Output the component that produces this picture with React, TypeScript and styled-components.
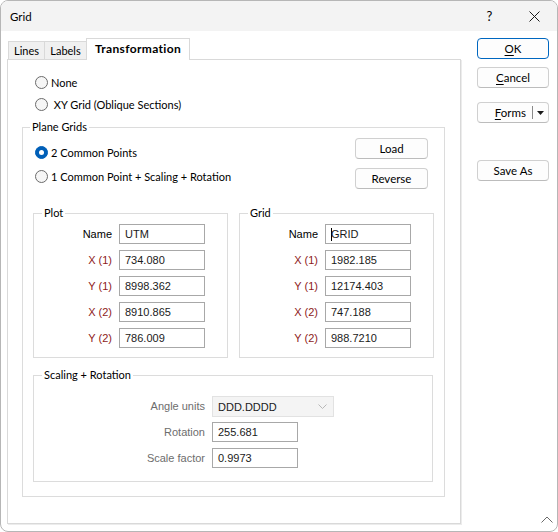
import React from "react";
import styled, { createGlobalStyle } from "styled-components";

const GlobalStyle = createGlobalStyle`
  html, body {
    margin: 0;
    padding: 0;
    background: #ffffff;
  }
  body {
    font-family: "Lato", "Noto Sans", sans-serif;
    font-size: 11px;
    color: #000000;
  }
`;

const Window = styled.div`
  position: relative;
  width: 558px;
  height: 532px;
  box-sizing: border-box;
  border: 1px solid #b6b6b6;
  border-radius: 8px;
  overflow: hidden;
  display: flex;
  flex-direction: column;
  background: #ffffff;
`;

const TitleBar = styled.div`
  height: 30px;
  flex: none;
  display: flex;
  align-items: center;
  background: #f3f3f3;
  padding-left: 9px;
  font-size: 11.5px;
`;

const Title = styled.div`
  flex: 1;
`;

const CaptionButton = styled.div`
  width: 45px;
  height: 30px;
  display: flex;
  align-items: center;
  justify-content: center;
  font-size: 13px;
`;

const Body = styled.div`
  flex: 1;
  display: flex;
  gap: 16px;
  padding: 7px 0 0 6px;
`;

const LeftColumn = styled.div`
  width: 454px;
  display: flex;
  flex-direction: column;
`;

const TabStrip = styled.div`
  height: 22px;
  display: flex;
  align-items: flex-end;
  padding-left: 1px;
  margin-bottom: -1px;
`;

const Tab = styled.div<{ $active?: boolean; $width: number }>`
  box-sizing: border-box;
  width: ${(p) => p.$width}px;
  height: ${(p) => (p.$active ? "22px" : "18px")};
  margin-bottom: ${(p) => (p.$active ? "0" : "1px")};
  display: flex;
  align-items: center;
  justify-content: center;
  border: 1px solid #d9d9d9;
  border-bottom: none;
  background: ${(p) => (p.$active ? "#ffffff" : "#f0f0f0")};
  font-size: ${(p) => (p.$active ? "12px" : "11px")};
  font-weight: ${(p) => (p.$active ? 700 : 400)};
  letter-spacing: ${(p) => (p.$active ? "0.35px" : "0")};
  position: ${(p) => (p.$active ? "relative" : "static")};
  padding-bottom: ${(p) => (p.$active ? "3px" : "0")};
  & + & {
    margin-left: -1px;
  }
`;

const Panel = styled.div`
  box-sizing: border-box;
  height: 465px;
  border: 1px solid #d9d9d9;
  box-shadow: 1px 1px 0 #ececec;
  padding: 11px 15px 0 14px;
  display: flex;
  flex-direction: column;
`;

const RadioRow = styled.label<{ $height?: number; $indent?: number }>`
  height: ${(p) => p.$height ?? 22}px;
  display: flex;
  align-items: center;
  gap: 3px;
  padding-left: ${(p) => p.$indent ?? 0}px;
  white-space: pre;
`;

const RadioDot = styled.span<{ $checked?: boolean }>`
  box-sizing: border-box;
  width: 13px;
  height: 13px;
  border-radius: 50%;
  flex: none;
  border: 1px solid ${(p) => (p.$checked ? "#005fb8" : "#6b6b6b")};
  background: ${(p) => (p.$checked ? "#005fb8" : "#f6f6f6")};
  display: flex;
  align-items: center;
  justify-content: center;
  &::after {
    content: "";
    display: ${(p) => (p.$checked ? "block" : "none")};
    width: 5px;
    height: 5px;
    border-radius: 50%;
    background: #ffffff;
  }
`;

const Group = styled.fieldset`
  margin: 0;
  padding: 0;
  min-width: 0;
  border: 1px solid #dcdcdc;
  box-sizing: border-box;
`;

const Legend = styled.legend<{ $offset?: number }>`
  margin-left: ${(p) => p.$offset ?? 8}px;
  padding: 0 2px;
  line-height: 16px;
  font-size: 11px;
`;

const PlaneGroup = styled(Group)`
  margin: 4px 0 0 0;
  padding: 0 0 14px 0;
`;

const TopSection = styled.div`
  display: flex;
  justify-content: space-between;
  padding: 3px 16px 0 12px;
`;

const RadioColumn = styled.div`
  padding-top: 2px;
  display: flex;
  flex-direction: column;
`;

const ButtonColumn = styled.div`
  display: flex;
  flex-direction: column;
  gap: 9px;
`;

const Button = styled.div<{ $width?: number; $default?: boolean; $top?: number }>`
  box-sizing: border-box;
  width: ${(p) => p.$width ?? 72}px;
  height: 21px;
  margin-top: ${(p) => p.$top ?? 0}px;
  border: 1px solid ${(p) => (p.$default ? "#0067c0" : "#d0d0d0")};
  border-bottom-color: ${(p) => (p.$default ? "#0067c0" : "#bcbcbc")};
  border-radius: 4px;
  background: #fdfdfd;
  display: flex;
  align-items: center;
  justify-content: center;
  font-size: 11.5px;
  flex: none;
`;

const SplitLabel = styled.div`
  flex: 1;
  display: flex;
  justify-content: flex-end;
  padding-right: 6px;
`;

const SplitDivider = styled.div`
  width: 1px;
  height: 13px;
  background: #8a8a8a;
`;

const SplitArrow = styled.div`
  width: 15px;
  display: flex;
  align-items: center;
  justify-content: center;
`;

const Key = styled.span`
  text-decoration: underline;
  text-underline-offset: 2px;
`;

const PairRow = styled.div`
  display: flex;
  gap: 11px;
  margin-top: 16px;
  padding: 0 10px;
`;

const CoordGroup = styled(Group)`
  width: 195px;
  padding: 3px 0 9px 0;
`;

const FormGrid = styled.div<{ $labelWidth: number }>`
  display: grid;
  grid-template-columns: ${(p) => p.$labelWidth}px auto;
  grid-auto-rows: 20px;
  column-gap: 7px;
  row-gap: 6px;
  justify-items: start;
  align-items: center;
`;

const FieldLabel = styled.div<{ $tone?: "plain" | "coord" | "muted" }>`
  justify-self: end;
  font-family: "Liberation Sans", Arial, sans-serif;
  font-size: 11px;
  color: ${(p) =>
    p.$tone === "coord" ? "#8e1b1b" : p.$tone === "muted" ? "#6d6d6d" : "#000000"};
`;

const Field = styled.div<{ $width?: number; $disabled?: boolean }>`
  box-sizing: border-box;
  width: ${(p) => p.$width ?? 86}px;
  height: ${(p) => (p.$disabled ? 21 : 20)}px;
  align-self: start;
  border: 1px solid ${(p) => (p.$disabled ? "#e2e2e2" : "#a8a8a8")};
  background: ${(p) => (p.$disabled ? "#f4f4f4" : "#ffffff")};
  padding-left: 5px;
  display: flex;
  align-items: center;
  font-family: "Liberation Sans", Arial, sans-serif;
  font-size: 11px;
  color: #1a1a1a;
`;

const FieldText = styled.span`
  flex: 1;
`;

const Caret = styled.span`
  width: 1px;
  height: 13px;
  background: #000000;
  margin-right: -1px;
`;

const ScaleGroup = styled(Group)`
  margin: 9px 11px 0 10px;
  padding: 13px 0 13px 0;
`;

const RightColumn = styled.div`
  width: 72px;
  display: flex;
  flex-direction: column;
`;

const Grip = styled.svg`
  position: absolute;
  right: 4px;
  bottom: 8px;
`;

const coords = (values: string[]) =>
  ["X (1)", "Y (1)", "X (2)", "Y (2)"].map((label, i) => (
    <React.Fragment key={label}>
      <FieldLabel $tone="coord">{label}</FieldLabel>
      <Field>
        <FieldText>{values[i]}</FieldText>
      </Field>
    </React.Fragment>
  ));

export default function App() {
  return (
    <>
      <GlobalStyle />
      <Window>
        <TitleBar>
          <Title>Grid</Title>
          <CaptionButton>?</CaptionButton>
          <CaptionButton>
            <svg width="11" height="11" viewBox="0 0 11 11">
              <path d="M0.5 0.5 L10.5 10.5 M10.5 0.5 L0.5 10.5" stroke="#1a1a1a" strokeWidth="1" />
            </svg>
          </CaptionButton>
        </TitleBar>
        <Body>
          <LeftColumn>
            <TabStrip>
              <Tab $width={37}>Lines</Tab>
              <Tab $width={43}>Labels</Tab>
              <Tab $width={104} $active>
                Transformation
              </Tab>
            </TabStrip>
            <Panel>
              <RadioRow $indent={13}>
                <RadioDot />
                None
              </RadioRow>
              <RadioRow $indent={13}>
                <RadioDot />
                {" XY Grid (Oblique Sections)"}
              </RadioRow>
              <PlaneGroup>
                <Legend $offset={7}>Plane Grids</Legend>
                <TopSection>
                  <RadioColumn>
                    <RadioRow $height={24}>
                      <RadioDot $checked />
                      2 Common Points
                    </RadioRow>
                    <RadioRow $height={24}>
                      <RadioDot />
                      1 Common Point + Scaling + Rotation
                    </RadioRow>
                  </RadioColumn>
                  <ButtonColumn>
                    <Button $width={73}>Load</Button>
                    <Button $width={73}>Reverse</Button>
                  </ButtonColumn>
                </TopSection>
                <PairRow>
                  <CoordGroup>
                    <Legend>Plot</Legend>
                    <FormGrid $labelWidth={78}>
                      <FieldLabel>Name</FieldLabel>
                      <Field>
                        <FieldText>UTM</FieldText>
                      </Field>
                      {coords(["734.080", "8998.362", "8910.865", "786.009"])}
                    </FormGrid>
                  </CoordGroup>
                  <CoordGroup>
                    <Legend>Grid</Legend>
                    <FormGrid $labelWidth={78}>
                      <FieldLabel>Name</FieldLabel>
                      <Field>
                        <Caret />
                        <FieldText>GRID</FieldText>
                      </Field>
                      {coords(["1982.185", "12174.403", "747.188", "988.7210"])}
                    </FormGrid>
                  </CoordGroup>
                </PairRow>
                <ScaleGroup>
                  <Legend>Scaling + Rotation</Legend>
                  <FormGrid $labelWidth={171}>
                    <FieldLabel $tone="muted">Angle units</FieldLabel>
                    <Field $width={122} $disabled>
                      <FieldText>DDD.DDDD</FieldText>
                      <svg width="20" height="8" viewBox="0 0 20 8">
                        <path d="M5.5 1.5 L9.5 5.5 L13.5 1.5" fill="none" stroke="#b8b8b8" strokeWidth="1" />
                      </svg>
                    </Field>
                    <FieldLabel $tone="muted">Rotation</FieldLabel>
                    <Field>
                      <FieldText>255.681</FieldText>
                    </Field>
                    <FieldLabel $tone="muted">Scale factor</FieldLabel>
                    <Field>
                      <FieldText>0.9973</FieldText>
                    </Field>
                  </FormGrid>
                </ScaleGroup>
              </PlaneGroup>
            </Panel>
          </LeftColumn>
          <RightColumn>
            <Button $default>
              <Key>O</Key>K
            </Button>
            <Button $top={8}>
              <Key>C</Key>ancel
            </Button>
            <Button $top={14}>
              <SplitLabel>
                <span>
                  <Key>F</Key>orms
                </span>
              </SplitLabel>
              <SplitDivider />
              <SplitArrow>
                <svg width="7" height="4" viewBox="0 0 7 4">
                  <path d="M0 0 L7 0 L3.5 4 Z" fill="#1a1a1a" />
                </svg>
              </SplitArrow>
            </Button>
            <Button $top={37}>Save As</Button>
          </RightColumn>
        </Body>
        <Grip width="12" height="7" viewBox="0 0 12 7">
          <path d="M0.5 6.5 L6 1 L11.5 6.5" fill="none" stroke="#6a6a6a" strokeWidth="1" />
        </Grip>
      </Window>
    </>
  );
}
